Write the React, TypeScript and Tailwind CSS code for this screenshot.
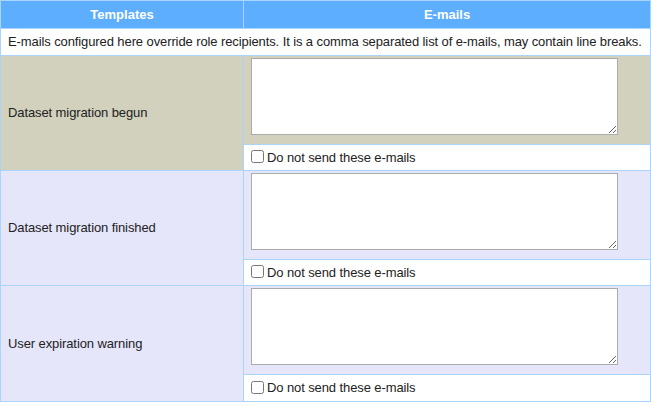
import { useState } from "react";

// Notification templates → per-template override recipients.
const TEMPLATES = [
  { key: "migration_begun", label: "Dataset migration begun", bg: "bg-[#d1d1bd]", last: false },
  { key: "migration_finished", label: "Dataset migration finished", bg: "bg-[#e6e6fa]", last: false },
  { key: "user_expiration", label: "User expiration warning", bg: "bg-[#e6e6fa]", last: true },
];

export default function App() {
  const [emails, setEmails] = useState<Record<string, string>>({});
  const [muted, setMuted] = useState<Record<string, boolean>>({});

  return (
    <div className="w-[651px] h-[403px] bg-white text-[13px] text-[#222] tracking-[-0.1px]" style={{ fontFamily: '"Liberation Sans", Arial, sans-serif' }}>
      <div className="grid grid-cols-[242px_406px] gap-px bg-[#aad4fb] p-px">
        <div className="h-[27px] flex items-center justify-center bg-[#5eaeff] text-white font-bold tracking-normal">Templates</div>
        <div className="h-[27px] flex items-center justify-center bg-[#5eaeff] text-white font-bold tracking-normal">E-mails</div>

        <div className="col-span-2 h-[26px] flex items-center pl-[7px] bg-white whitespace-nowrap">
          E-mails configured here override role recipients. It is a comma separated list of e-mails, may contain line breaks.
        </div>

        {TEMPLATES.map(t => (
          <div key={t.key} className="contents">
            <div className={`row-span-2 flex items-center pl-[7px] ${t.bg}`}>{t.label}</div>
            <div className={`h-[88px] ${t.bg}`}>
              <textarea
                value={emails[t.key] ?? ""}
                onChange={e => setEmails({ ...emails, [t.key]: e.target.value })}
                className="block ml-[7px] mt-[2px] w-[367px] h-[77px] bg-white border border-[#ababab] outline-none"
              />
            </div>
            <label className={`${t.last ? "h-[26px]" : "h-[25px]"} flex items-center pl-[7px] bg-white`}>
              <input
                type="checkbox"
                checked={!!muted[t.key]}
                onChange={e => setMuted({ ...muted, [t.key]: e.target.checked })}
                className="w-[13px] h-[13px] m-0 mb-[2px]"
              />
              <span className="ml-[3px]">Do not send these e-mails</span>
            </label>
          </div>
        ))}
      </div>
    </div>
  );
}
